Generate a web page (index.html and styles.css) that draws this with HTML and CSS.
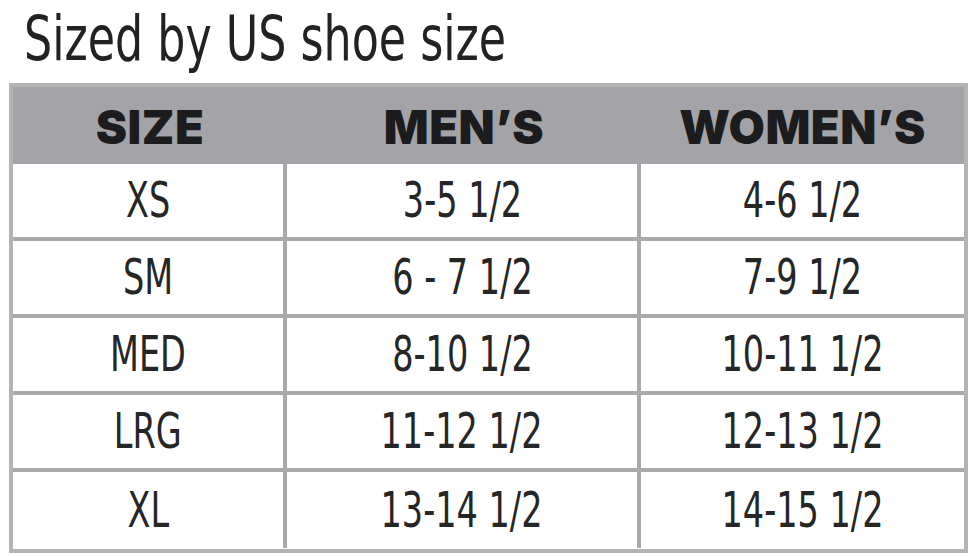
FILE: index.html
```html
<!DOCTYPE html>
<html>
<head>
<meta charset="utf-8">
<link rel="stylesheet" href="styles.css">
</head>
<body>
<h1 class="title"><span class="narrow">Sized by US shoe size</span></h1>
<div class="chart">
  <div class="hd">SIZE</div>
  <div class="hd">MEN’S</div>
  <div class="hd">WOMEN’S</div>

  <div class="c"><span class="narrow">XS</span></div><div class="c"><span class="narrow">3-5 1/2</span></div><div class="c"><span class="narrow">4-6 1/2</span></div>
  <div class="c"><span class="narrow">SM</span></div><div class="c"><span class="narrow">6 - 7 1/2</span></div><div class="c"><span class="narrow">7-9 1/2</span></div>
  <div class="c"><span class="narrow">MED</span></div><div class="c"><span class="narrow">8-10 1/2</span></div><div class="c"><span class="narrow">10-11 1/2</span></div>
  <div class="c"><span class="narrow">LRG</span></div><div class="c"><span class="narrow">11-12 1/2</span></div><div class="c"><span class="narrow">12-13 1/2</span></div>
  <div class="c last"><span class="narrow">XL</span></div><div class="c last"><span class="narrow">13-14 1/2</span></div><div class="c last"><span class="narrow">14-15 1/2</span></div>
</div>
</body>
</html>
```
FILE: styles.css
```css
html, body {
  margin: 0;
  padding: 0;
  background: #fff;
}
.narrow {
  display: inline-block;
  white-space: nowrap;
}
.title {
  margin: 0;
  height: 83px;
  box-sizing: border-box;
  padding: 5px 0 0 24px;
  font-family: "DejaVu Sans", sans-serif;
  font-stretch: condensed;
  font-weight: normal;
  font-size: 62px;
  line-height: 68px;
  color: #222;
}
.title .narrow {
  transform: scaleX(0.795);
  transform-origin: left center;
}
.chart {
  margin-left: 9px;
  width: 959px;
  box-sizing: border-box;
  border: 4px solid #b4b4b4;
  display: grid;
  grid-template-columns: 274px 354px 1fr;
  grid-auto-rows: 77px;
}
.hd {
  background: #a4a4a8;
  display: flex;
  align-items: center;
  justify-content: center;
  font-family: "Inter", "DejaVu Sans", sans-serif;
  font-weight: 900;
  font-size: 47px;
  letter-spacing: 0.5px;
  color: #1c1c1e;
  padding-top: 2px;
  box-sizing: border-box;
}
.c {
  display: flex;
  align-items: center;
  justify-content: center;
  box-sizing: border-box;
  border-bottom: 4px solid #aaa;
  font-family: "DejaVu Sans", sans-serif;
  font-stretch: condensed;
  font-size: 49px;
  color: #262626;
}
.c .narrow {
  transform: scaleX(0.76);
}
.c:nth-child(3n+1), .c:nth-child(3n+2) {
  border-right: 4px solid #aaa;
}
.c.last {
  border-bottom: none;
  height: 76px;
}
```
